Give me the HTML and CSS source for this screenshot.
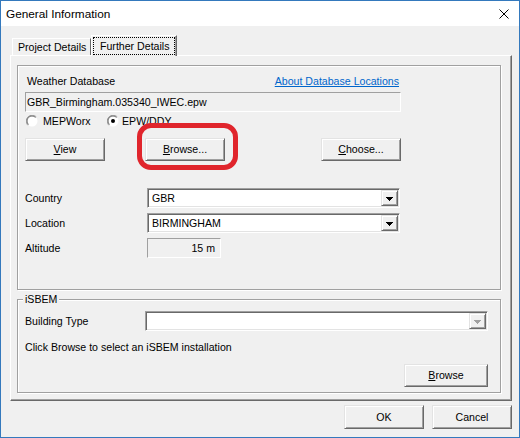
FILE: index.html
```html
<!DOCTYPE html>
<html>
<head>
<meta charset="utf-8">
<link rel="stylesheet" href="styles.css">
</head>
<body>
<div class="window">
  <div class="titlebar">
    <span class="title">General Information</span>
    <svg class="close" width="10" height="10" viewBox="0 0 10 10"><path d="M0.5 0.5L9.5 9.5M9.5 0.5L0.5 9.5" stroke="#000" stroke-width="1" fill="none"/></svg>
  </div>
  <div class="client">
    <div class="tabs">
      <div class="tab">Project Details</div>
      <div class="tab-active"><span class="focus">Further Details</span></div>
    </div>
    <div class="panel">
      <div class="group group-weather">
        <div class="row-head">
          <span class="label-wd">Weather Database</span>
          <span class="link">About Database Locations</span>
        </div>
        <div class="field field-file">GBR_Birmingham.035340_IWEC.epw</div>
        <div class="radios">
          <div class="radio-item radio-first">
            <svg class="radio" width="12" height="12" viewBox="0 0 12 12"><circle cx="6" cy="6" r="5.5" fill="#fff"/><path d="M1.76 10.24A6 6 0 0 1 10.24 1.76" stroke="#a0a0a0" fill="none"/><path d="M2.46 9.54A5 5 0 0 1 9.54 2.46" stroke="#696969" fill="none"/></svg>
            <span>MEPWorx</span>
          </div>
          <div class="radio-item radio-second">
            <svg class="radio" width="12" height="12" viewBox="0 0 12 12"><circle cx="6" cy="6" r="5.5" fill="#fff"/><path d="M1.76 10.24A6 6 0 0 1 10.24 1.76" stroke="#a0a0a0" fill="none"/><path d="M2.46 9.54A5 5 0 0 1 9.54 2.46" stroke="#696969" fill="none"/><circle cx="6" cy="6" r="2" fill="#000"/></svg>
            <span>EPW/DDY</span>
          </div>
        </div>
        <div class="btn-row">
          <div class="btn btn-view"><span><u>V</u>iew</span></div>
          <div class="btn btn-browse"><span><u>B</u>rowse...</span></div>
          <div class="btn btn-choose"><span><u>C</u>hoose...</span></div>
        </div>
        <div class="form-row row-country">
          <span class="lbl">Country</span>
          <div class="combo combo-loc">
            <span class="combo-text">GBR</span>
            <span class="drop"><svg width="7" height="4" viewBox="0 0 7 4" shape-rendering="crispEdges"><path d="M0 0h7v1H0zM1 1h5v1H1zM2 2h3v1H2zM3 3h1v1H3z" fill="#000"/></svg></span>
          </div>
        </div>
        <div class="form-row row-location">
          <span class="lbl">Location</span>
          <div class="combo combo-loc">
            <span class="combo-text">BIRMINGHAM</span>
            <span class="drop"><svg width="7" height="4" viewBox="0 0 7 4" shape-rendering="crispEdges"><path d="M0 0h7v1H0zM1 1h5v1H1zM2 2h3v1H2zM3 3h1v1H3z" fill="#000"/></svg></span>
          </div>
        </div>
        <div class="form-row row-altitude">
          <span class="lbl">Altitude</span>
          <div class="field field-alt">15 m</div>
        </div>
      </div>
      <div class="group group-isbem">
        <span class="group-title">iSBEM</span>
        <div class="form-row row-building">
          <span class="lbl lbl-building">Building Type</span>
          <div class="combo combo-building">
            <span class="combo-text"></span>
            <span class="drop"><svg width="7" height="4" viewBox="0 0 7 4" shape-rendering="crispEdges"><path d="M0 0h7v1H0zM1 1h5v1H1zM2 2h3v1H2zM3 3h1v1H3z" fill="#a0a0a0"/></svg></span>
          </div>
        </div>
        <div class="hint">Click Browse to select an iSBEM installation</div>
        <div class="btn btn-isbem"><span><u>B</u>rowse</span></div>
      </div>
    </div>
    <div class="footer">
      <div class="btn btn-footer"><span>OK</span></div>
      <div class="btn btn-footer"><span>Cancel</span></div>
    </div>
  </div>
  <div class="annotation"></div>
</div>
</body>
</html>
```

FILE: styles.css
```css
* { box-sizing: border-box; }
html, body { margin: 0; padding: 0; background: #f0f0f0; }
body {
  font-family: "Liberation Sans", Arial, sans-serif;
  font-size: 10.6px;
  line-height: 13px;
  color: #000;
}
.window {
  position: relative;
  width: 520px;
  height: 438px;
  border: 1px solid #3479bd;
  background: #f0f0f0;
  display: flex;
  flex-direction: column;
  overflow: hidden;
}
.titlebar {
  height: 25px;
  background: #fff;
  display: flex;
  align-items: center;
  justify-content: space-between;
  padding: 0 10px 0 5px;
  flex: none;
}
.title { font-size: 11.8px; line-height: 14px; }
.close { display: block; }

.client {
  flex: 1;
  padding: 9px 7px 0 9px;
  display: flex;
  flex-direction: column;
}
.tabs {
  height: 20px;
  display: flex;
  align-items: flex-end;
  padding-left: 2px;
  flex: none;
}
.tab {
  width: 79px;
  height: 17px;
  border-top: 1px solid #fff;
  border-left: 1px solid #fff;
  border-right: 1px solid #696969;
  padding-left: 5px;
  display: flex;
  align-items: center;
}
.tab-active {
  position: relative;
  z-index: 1;
  width: 86px;
  height: 21px;
  margin-bottom: -1px;
  background: #f0f0f0;
  border-top: 1px solid #fff;
  border-left: 1px solid #fff;
  border-right: 1px solid #696969;
  box-shadow: inset -1px 0 0 #a0a0a0;
  padding: 1px 0 0 1px;
}
.focus {
  display: flex;
  align-items: center;
  width: 82px;
  height: 18px;
  border: 1px dotted #000;
  padding: 0 5px 0 6px;
  white-space: nowrap;
}
.panel {
  width: 502px;
  height: 346px;
  flex: none;
  border-top: 1px solid #fff;
  border-left: 1px solid #fff;
  border-right: 1px solid #696969;
  border-bottom: 1px solid #696969;
  box-shadow: inset -1px -1px 0 #a0a0a0;
  padding: 9px 0 0 6px;
  display: flex;
  flex-direction: column;
}
.group {
  width: 484px;
  border: 1px solid #a0a0a0;
  box-shadow: 1px 1px 0 #fff, inset 1px 1px 0 #fff;
  display: flex;
  flex-direction: column;
  flex: none;
}
.group-weather {
  height: 225px;
  padding: 0 0 0 7px;
}
.row-head {
  margin-top: 9px;
  width: 376px;
  height: 13px;
  display: flex;
  justify-content: space-between;
}
.label-wd { padding-left: 2px; }
.link {
  padding-right: 2px;
  color: #0066cc;
  text-decoration: underline;
}
.field {
  height: 20px;
  border: 1px solid;
  border-color: #a0a0a0 #fff #fff #a0a0a0;
  line-height: 18px;
  white-space: nowrap;
}
.field-file {
  margin-top: 4px;
  width: 376px;
  padding-left: 1px;
}
.radios {
  margin-top: 2px;
  height: 14px;
  display: flex;
  align-items: center;
}
.radio-item { display: flex; align-items: center; }
.radio { display: block; }
.radio-first { width: 81px; margin-left: 1px; }
.radio-first .radio { margin-right: 5px; }
.radio-second .radio { margin-right: 3px; }

.btn {
  background: #f0f0f0;
  border: 1px solid;
  border-color: #e3e3e3 #696969 #696969 #e3e3e3;
  box-shadow: inset 1px 1px 0 #fff, inset -1px -1px 0 #a0a0a0;
  display: flex;
  align-items: center;
  justify-content: center;
  flex: none;
}
.btn-row {
  margin-top: 10px;
  width: 376px;
  display: flex;
}
.btn-row .btn { width: 80px; height: 23px; }
.btn-browse { margin-left: 40px; }
.btn-choose { margin-left: auto; }

.form-row {
  display: flex;
  align-items: center;
}
.lbl { width: 122px; flex: none; }
.row-country { margin-top: 27px; }
.row-location { margin-top: 5px; }
.row-altitude { margin-top: 5px; }
.combo {
  height: 20px;
  background: #fff;
  border: 1px solid;
  border-color: #a0a0a0 #fff #fff #a0a0a0;
  box-shadow: inset 1px 1px 0 #696969, inset -1px -1px 0 #e3e3e3;
  padding: 1px;
  display: flex;
}
.combo-loc { width: 253px; }
.combo-text {
  flex: 1;
  padding-left: 3px;
  line-height: 16px;
}
.drop {
  width: 17px;
  height: 16px;
  background: #f0f0f0;
  border: 1px solid;
  border-color: #e3e3e3 #696969 #696969 #e3e3e3;
  box-shadow: inset 1px 1px 0 #fff, inset -1px -1px 0 #a0a0a0;
  display: flex;
  align-items: center;
  justify-content: center;
  padding-top: 1px;
}
.drop svg { display: block; }
.field-alt {
  width: 74px;
  text-align: right;
  padding-right: 5px;
}

.group-isbem {
  margin-top: 9px;
  height: 94px;
  padding: 0 12px 0 7px;
}
.group-title {
  align-self: flex-start;
  margin: -7px 0 0 -2px;
  padding: 0 2px;
  background: #f0f0f0;
  height: 13px;
}
.row-building { margin-top: 5px; }
.lbl-building { width: 120px; }
.combo-building { flex: 1; }
.hint { margin-top: 10px; height: 13px; }
.btn-isbem {
  margin-top: 10px;
  align-self: flex-end;
  width: 84px;
  height: 23px;
}

.footer {
  margin-top: 4px;
  display: flex;
  justify-content: flex-end;
  gap: 8px;
}
.btn-footer { width: 80px; height: 24px; }

.annotation {
  position: absolute;
  left: 136px;
  top: 122px;
  width: 101px;
  height: 47px;
  border: 5px solid #e0252c;
  border-radius: 14px;
  pointer-events: none;
}
```
